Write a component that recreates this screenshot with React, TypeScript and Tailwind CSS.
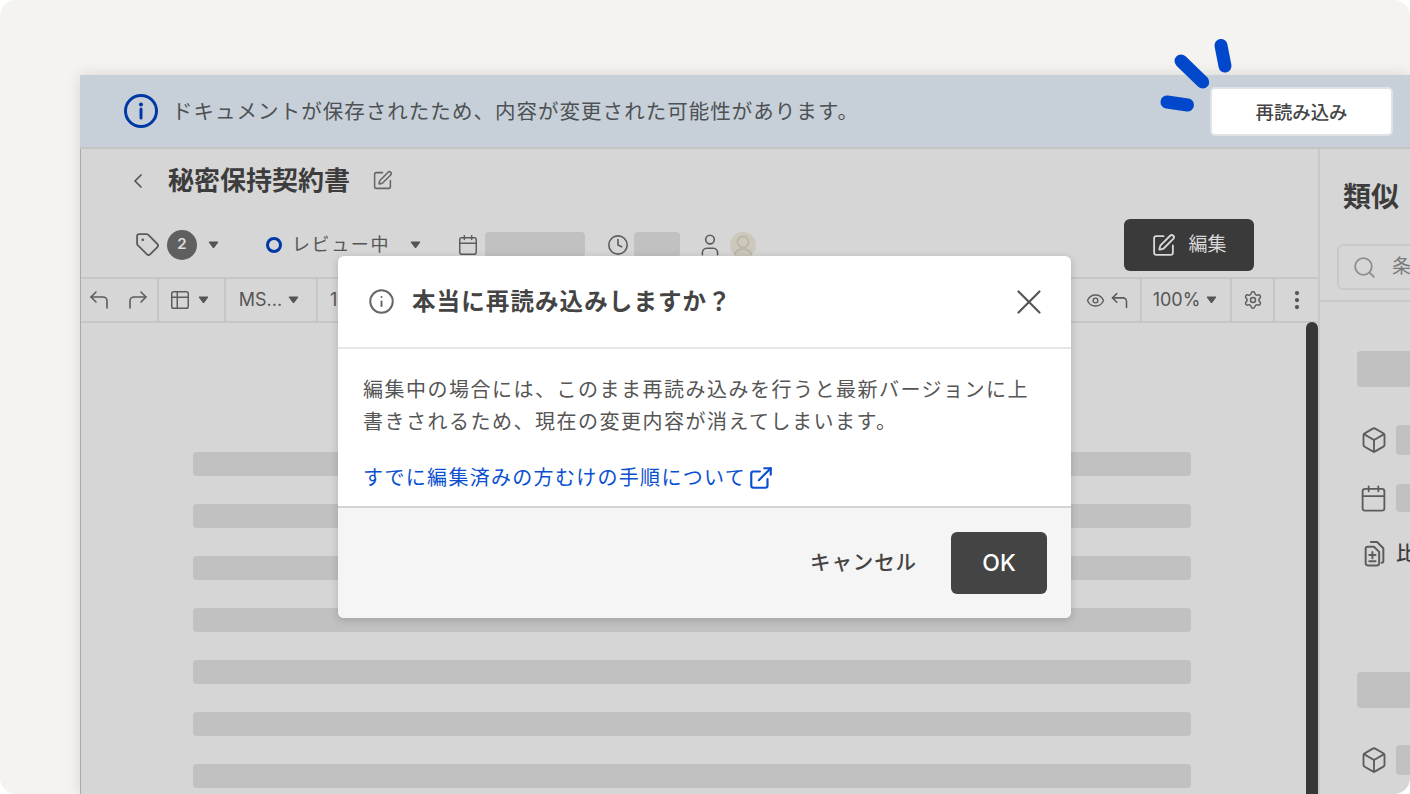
import {
  Box,
  Calendar,
  ChevronLeft,
  Clock,
  CornerUpLeft,
  CornerUpRight,
  EllipsisVertical,
  ExternalLink,
  Eye,
  Info,
  Search,
  Settings,
  SquarePen,
  Table2,
  Tag,
  User,
  X,
} from "lucide-react";

const font = "font-['Inter','Noto_Sans_CJK_JP',sans-serif]";

const Caret = () => (
  <svg width="11" height="8" viewBox="0 0 11 8" className="shrink-0">
    <path d="M1 1h9L5.5 7z" fill="#555" stroke="#555" strokeLinejoin="round" />
  </svg>
);

const Pill = ({ className }: { className: string }) => (
  <div className={`rounded-[4px] bg-[#c1c1c1] ${className}`} />
);

const CompareIcon = () => (
  <svg width="21" height="26" viewBox="2 1 19 25" className="shrink-0" fill="none" stroke="#5c5c5c" strokeWidth="1.9" strokeLinejoin="round" strokeLinecap="round">
    <path d="M3 8.5c0-1 .8-2 2-2h6l5 5v11c0 1-1 2-2 2H5c-1.2 0-2-1-2-2z" />
    <path d="M8 2h6l6 6v12c0 1-.5 2-1.5 2" />
    <path d="M9.5 11.5v6M6.5 14.5h6M6.5 20.5h6" />
  </svg>
);

const Avatar = () => (
  <div className="flex h-[26px] w-[26px] items-end justify-center overflow-hidden rounded-full bg-[#cdc8bc]">
    <svg width="26" height="26" viewBox="0 0 26 26" fill="none" stroke="#bcb6a8" strokeWidth="2">
      <circle cx="13" cy="10" r="5.5" />
      <path d="M4 25c1-6 5-8 9-8s8 2 9 8" />
    </svg>
  </div>
);

const ToolCell = ({ className, children }: { className: string; children: React.ReactNode }) => (
  <div className={`flex h-full shrink-0 items-center border-r-2 border-[#c6c6c6] ${className}`}>
    {children}
  </div>
);

const lines = [0, 1, 2, 3, 4, 5, 6];

export default function App() {
  return (
    <div className={`h-[794px] w-[1410px] overflow-hidden bg-white ${font}`}>
      <div className="h-full overflow-hidden rounded-[16px] bg-[#f4f3ef] pl-[80px] pt-[75px]">
        <div className="relative flex h-[719px] flex-col shadow-[0_0_14px_rgba(0,0,0,0.12)]">
          {/* banner */}
          <div className="flex h-[74px] shrink-0 items-center justify-between border-b-2 border-[#c4c4c4] bg-[#c7d0d8] pl-[44px] pr-[17px]">
            <div className="flex items-center gap-[14px]">
              <svg width="34" height="34" viewBox="0 0 34 34" fill="none">
                <circle cx="17" cy="17" r="15.5" stroke="#0039a6" strokeWidth="3" />
                <circle cx="17" cy="10.5" r="2" fill="#0039a6" />
                <path d="M17 15v9" stroke="#0039a6" strokeWidth="3" strokeLinecap="round" />
              </svg>
              <span className="pt-[3px] text-[20.5px] tracking-[1.03px] text-[#4d5154]">
                ドキュメントが保存されたため、内容が変更された可能性があります。
              </span>
            </div>
            <button className="flex h-[49px] w-[183px] items-center justify-center rounded-[5px] border-2 border-[#dfe3e6] bg-white pt-[3px] text-[18.4px] font-medium text-[#444]">
              再読み込み
            </button>
          </div>

          <div className="flex min-h-0 flex-1 border-l border-[#a9a9a9] bg-[#d6d6d6]">
            {/* document column */}
            <div className="flex w-[1239px] shrink-0 flex-col border-r-2 border-[#c9c9c9]">
              <div className="flex h-[63px] shrink-0 items-center pl-[45px]">
                <ChevronLeft size={24} strokeWidth={1.75} color="#555" />
                <span className="ml-[18px] text-[26px] font-bold text-[#3c3c3c]">秘密保持契約書</span>
                <SquarePen size={21} strokeWidth={1.75} color="#666" className="ml-[22px]" />
              </div>

              <div className="flex h-[65px] shrink-0 items-center pl-[54px]">
                <Tag size={25} strokeWidth={1.75} color="#5c5c5c" />
                <div className="ml-[7px] flex h-[30px] w-[30px] items-center justify-center rounded-full bg-[#5f5f5f] text-[15px] font-semibold text-[#ddd]">
                  2
                </div>
                <div className="ml-[11px]">
                  <Caret />
                </div>
                <div className="ml-[47px] h-[16px] w-[16px] rounded-full border-[3.5px] border-[#0039a6]" />
                <span className="ml-[10px] text-[18px] tracking-[1.6px] text-[#555]">レビュー中</span>
                <div className="ml-[20px]">
                  <Caret />
                </div>
                <Calendar size={22} strokeWidth={1.6} color="#5c5c5c" className="ml-[36px]" />
                <Pill className="ml-[6px] h-[25px] w-[100px]" />
                <Clock size={22} strokeWidth={1.75} color="#5c5c5c" className="ml-[22px]" />
                <Pill className="ml-[5px] h-[25px] w-[46px]" />
                <User size={26} strokeWidth={1.5} color="#5c5c5c" className="ml-[17px]" />
                <div className="ml-[7px]">
                  <Avatar />
                </div>
                <button className="ml-[368px] flex h-[52px] w-[130px] items-center justify-center gap-[12px] rounded-[6px] bg-[#3a3a3a] pt-[1px] text-[19px] text-[#d8d8d8]">
                  <SquarePen size={25} strokeWidth={1.75} color="#d8d8d8" />
                  編集
                </button>
              </div>

              {/* toolbar */}
              <div className="flex h-[46px] shrink-0 items-center justify-between border-y-2 border-[#c6c6c6] text-[18px] text-[#555]">
                <div className="flex h-full items-center">
                  <ToolCell className="w-[78px] justify-center gap-[15px] pr-[2px]">
                    <CornerUpLeft size={24} strokeWidth={1.6} color="#5c5c5c" />
                    <CornerUpRight size={24} strokeWidth={1.6} color="#5c5c5c" />
                  </ToolCell>
                  <ToolCell className="w-[67px] justify-center gap-[7px] pr-[6px]">
                    <Table2 size={22} strokeWidth={1.6} color="#5c5c5c" />
                    <Caret />
                  </ToolCell>
                  <ToolCell className="w-[92px] justify-center gap-[6px] pr-[4px]">
                    <span className="pb-[2px]">MS...</span>
                    <Caret />
                  </ToolCell>
                  <span className="ml-[12px] pb-[2px]">1</span>
                </div>
                <div className="flex h-full items-center">
                  <ToolCell className="w-[66px] justify-center gap-[4px]">
                    <Eye size={19} strokeWidth={1.75} color="#5c5c5c" />
                    <CornerUpLeft size={21} strokeWidth={1.75} color="#5c5c5c" />
                  </ToolCell>
                  <ToolCell className="w-[90px] justify-center gap-[6px] pr-[2px]">
                    <span className="pb-[2px]">100%</span>
                    <Caret />
                  </ToolCell>
                  <ToolCell className="w-[43px] justify-center">
                    <Settings size={20} strokeWidth={1.75} color="#5c5c5c" />
                  </ToolCell>
                  <div className="flex w-[43px] justify-center">
                    <EllipsisVertical size={24} strokeWidth={2.25} color="#555" />
                  </div>
                </div>
              </div>

              <div className="flex min-h-0 flex-1">
                <div className="flex flex-1 flex-col gap-[28px] pl-[112px] pt-[129px]">
                  {lines.map((l) => (
                    <Pill key={l} className="h-[24px] w-[998px] shrink-0" />
                  ))}
                </div>
                <div className="mt-[-1px] w-[12px] shrink-0 rounded-t-[6px] bg-[#363636]" />
              </div>
            </div>

            {/* side panel */}
            <div className="flex min-w-0 flex-1 flex-col overflow-hidden">
              <div className="h-[153px] shrink-0 border-b-2 border-[#c9c9c9] pl-[23px] pt-[27px]">
                <div className="whitespace-nowrap text-[28px] font-bold text-[#3c3c3c]">類似</div>
                <div className="ml-[-6px] mt-[26px] flex h-[46px] w-[120px] items-center gap-[15px] rounded-l-[6px] border-2 border-r-0 border-[#c9c9c9] pl-[13px]">
                  <Search size={25} strokeWidth={1.75} color="#8e8e8e" className="shrink-0" />
                  <span className="text-[19px] text-[#7a7a7a]">条</span>
                </div>
              </div>
              <div className="flex flex-col pl-[37px] pt-[49px]">
                <Pill className="h-[36px] w-[80px] rounded-r-none" />
                <div className="ml-[3px] mt-[38px] flex h-[30px] items-center gap-[8px]">
                  <Box size={28} strokeWidth={1.6} color="#5c5c5c" className="shrink-0" />
                  <Pill className="h-[30px] w-[30px] rounded-r-none" />
                </div>
                <div className="ml-[2px] mt-[28px] flex h-[30px] items-center gap-[8px]">
                  <Calendar size={29} strokeWidth={1.5} color="#5c5c5c" className="shrink-0" />
                  <Pill className="h-[28px] w-[30px] rounded-r-none" />
                </div>
                <div className="ml-[7px] mt-[26px] flex h-[30px] items-center gap-[11px] whitespace-nowrap text-[19px] font-medium text-[#3c3c3c]">
                  <CompareIcon />
                  <span>比</span>
                </div>
                <Pill className="mt-[103px] h-[36px] w-[80px] rounded-r-none" />
                <div className="ml-[3px] mt-[37px] flex h-[30px] items-center gap-[8px]">
                  <Box size={28} strokeWidth={1.6} color="#5c5c5c" className="shrink-0" />
                  <Pill className="h-[30px] w-[30px] rounded-r-none" />
                </div>
              </div>
            </div>
          </div>

          {/* attention rays over the reload button */}
          <svg width="80" height="80" viewBox="0 0 80 80" className="absolute left-[1078px] top-[-38px]" fill="none" stroke="#0047cc" strokeWidth="13" strokeLinecap="round">
            <path d="M23 24 44.7 45" />
            <path d="M63 8.5 67 29" />
            <path d="M9 65 29.5 68" />
          </svg>

          {/* modal */}
          <div className="absolute left-[258px] top-[181px] flex h-[362px] w-[733px] flex-col overflow-hidden rounded-[6px] bg-white shadow-[0_2px_8px_rgba(0,0,0,0.18)]">
            <div className="flex h-[93px] shrink-0 items-center border-b-2 border-[#e6e6e6] pl-[30px] pr-[21px]">
              <Info size={27} strokeWidth={1.75} color="#666" />
              <span className="ml-[17px] text-[23.5px] font-bold tracking-[1.1px] text-[#444]">本当に再読み込みしますか？</span>
              <X size={42} strokeWidth={1.25} color="#555" className="ml-auto" />
            </div>
            <div className="flex flex-1 flex-col px-[25px] pt-[25px]">
              <p className="w-[680px] text-[20px] leading-[32px] tracking-[1.5px] text-[#555]">
                編集中の場合には、このまま再読み込みを行うと最新バージョンに上書きされるため、現在の変更内容が消えてしまいます。
              </p>
              <div className="mt-[24px] flex items-center gap-[2px] text-[20px] leading-[32px] tracking-[1.3px] text-[#0a4fd0]">
                すでに編集済みの方むけの手順について
                <ExternalLink size={26} strokeWidth={2} color="#0a4fd0" />
              </div>
            </div>
            <div className="flex h-[112px] shrink-0 items-center justify-end gap-[34px] border-t-2 border-[#d2d2d2] bg-[#f5f5f5] pr-[24px]">
              <span className="text-[20.5px] font-medium tracking-[0.9px] text-[#444]">キャンセル</span>
              <button className="flex h-[62px] w-[96px] items-center justify-center rounded-[6px] bg-[#444] text-[23px] font-medium text-white">
                OK
              </button>
            </div>
          </div>
        </div>
      </div>
    </div>
  );
}
